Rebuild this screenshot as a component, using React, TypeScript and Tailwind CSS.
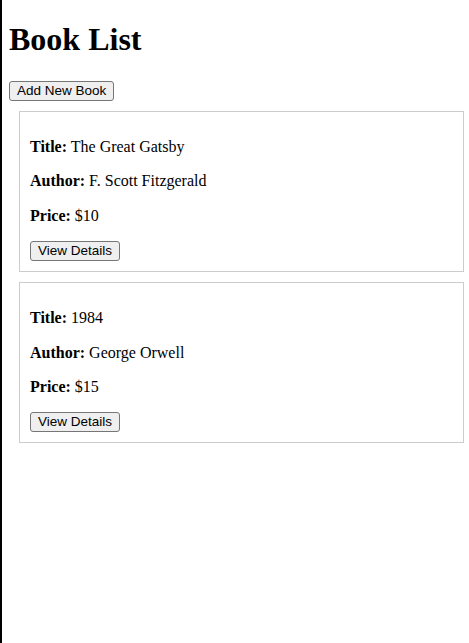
type Book = {
  id: number;
  title: string;
  author: string;
  price: number;
};

const BOOKS: Book[] = [
  { id: 1, title: 'The Great Gatsby', author: 'F. Scott Fitzgerald', price: 10 },
  { id: 2, title: '1984', author: 'George Orwell', price: 15 },
];

// mimics the browser's default push button
const BUTTON =
  "block bg-[#efefef] border border-[#767676] rounded-[3px] px-[7px] py-[1px] text-[13.5px] leading-[16px] text-black font-['Liberation_Sans',Arial,sans-serif] hover:bg-[#e5e5e5]";

function BookCard({ book }: { book: Book }) {
  return (
    <div className="my-[10px] ml-[10px] w-[445px] border border-[#ccc] p-[10px]">
      <p className="my-4 leading-[18.4px]">
        <strong>Title:</strong> {book.title}
      </p>
      <p className="my-4 leading-[18.4px]">
        <strong>Author:</strong> {book.author}
      </p>
      <p className="my-4 leading-[18.4px]">
        <strong>Price:</strong> ${book.price}
      </p>
      <button className={BUTTON}>View Details</button>
    </div>
  );
}

export default function App() {
  return (
    <div className="min-h-[643px] border-l-2 border-black bg-white pl-[7px] pt-[21px] text-base text-black font-['Liberation_Serif','Times_New_Roman',serif]">
      <h1 className="mb-[23px] text-[32px] font-bold leading-[37px]">Book List</h1>
      <button className={BUTTON}>Add New Book</button>
      <div>
        {BOOKS.map((b) => (
          <BookCard key={b.id} book={b} />
        ))}
      </div>
    </div>
  );
}
